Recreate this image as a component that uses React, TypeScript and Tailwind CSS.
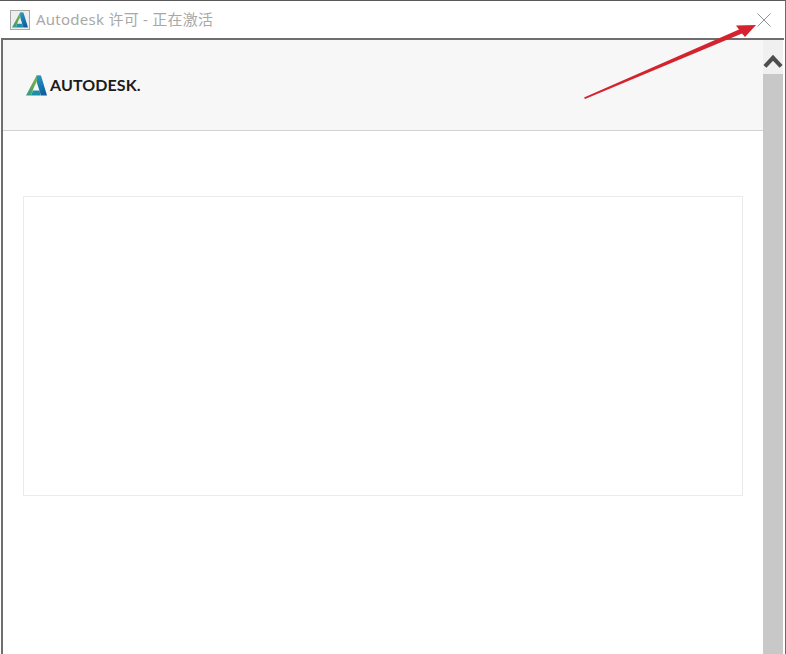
const AutodeskMark = ({ className }: { className?: string }) => (
  <svg viewBox="0 0 21 21" className={className}>
    <defs>
      <linearGradient id="leftLeg" x1="0" y1="1" x2="0.7" y2="0">
        <stop offset="0" stopColor="#2c9c98" />
        <stop offset="0.5" stopColor="#5fa552" />
        <stop offset="1" stopColor="#86b84c" />
      </linearGradient>
      <linearGradient id="rightLeg" x1="0" y1="0" x2="0.3" y2="1">
        <stop offset="0" stopColor="#2a9bc4" />
        <stop offset="1" stopColor="#0f5f9e" />
      </linearGradient>
    </defs>
    <path d="M0 20.5 L10.5 0.5 H14 L8 12 L5 20.5 Z" fill="url(#leftLeg)" />
    <path d="M5 20.5 L7 15.5 H13.5 L14.8 20.5 Z" fill="#1c8fa8" />
    <path d="M10.5 0.5 H15 L21 20.5 H15 L11 8 Z" fill="url(#rightLeg)" />
  </svg>
);

const App = () => {
  return (
    <div className="relative flex flex-col w-[786px] h-[654px] overflow-hidden bg-white border-t border-t-[#5a5a5a] border-r border-r-[#6b6b6b] font-['Noto_Sans','Noto_Sans_CJK_SC',sans-serif]">
      {/* 标题栏 */}
      <div className="flex items-center shrink-0 h-[37px] pl-[10px] pr-[12px]">
        <div className="flex items-center justify-center w-[20px] h-[20px] border border-[#a8a8a8] bg-[#eeeeee]">
          <AutodeskMark className="w-[16px] h-[16px]" />
        </div>
        <span className="ml-[6px] text-[15px] leading-none tracking-[0.25px] text-[#a8a8a8]">
          Autodesk 许可 - 正在激活
        </span>
        <svg viewBox="0 0 14 14" className="ml-auto w-[14px] h-[14px] mr-[2px]" stroke="#8a8a8a" fill="none" strokeWidth="0.9">
          <path d="M0.5 0.5 L13.5 13.5 M13.5 0.5 L0.5 13.5" />
        </svg>
      </div>

      {/* 内容区 */}
      <div className="flex flex-1 min-h-0 ml-[1px] mr-[1px] border-t-2 border-t-[#6e6e6e] border-l-2 border-l-[#6e6e6e]">
        <div className="flex flex-col flex-1 min-w-0">
          <div className="flex items-center shrink-0 h-[91px] pl-[23px] bg-[#f7f7f7] border-b border-b-[#d2d2d2]">
            <AutodeskMark className="w-[21px] h-[21px]" />
            <span className="ml-[3px] text-[16px] font-bold leading-none tracking-[0.1px] text-[#1b1b1b] font-['Lato',sans-serif]">
              AUTODESK.
            </span>
          </div>
          <div className="flex-1 px-[20px] pt-[65px]">
            <div className="w-[720px] h-[300px] border border-[#ebebeb]" />
          </div>
        </div>

        {/* 滚动条 */}
        <div className="flex flex-col shrink-0 w-[20px] mr-[1px] bg-[#c8c8c8]">
          <div className="flex items-center justify-center h-[34px] pt-[8px] bg-[#f0f0f0]">
            <svg viewBox="0 0 18 13" className="w-[20px] h-[14px]" fill="none" stroke="#4d4d4d" strokeWidth="3.8">
              <path d="M1.5 11.5 L9 3.5 L16.5 11.5" />
            </svg>
          </div>
        </div>
      </div>

      {/* 红色箭头标注 */}
      <svg viewBox="0 0 786 654" className="absolute left-0 top-0 w-[786px] h-[654px] pointer-events-none">
        <path d="M584 96.5 L739 28.5 L736 24.5 L756 24 L745 36 L742 32.5 L585 98 Z" fill="#d4232f" />
      </svg>
    </div>
  );
};

export default App;
